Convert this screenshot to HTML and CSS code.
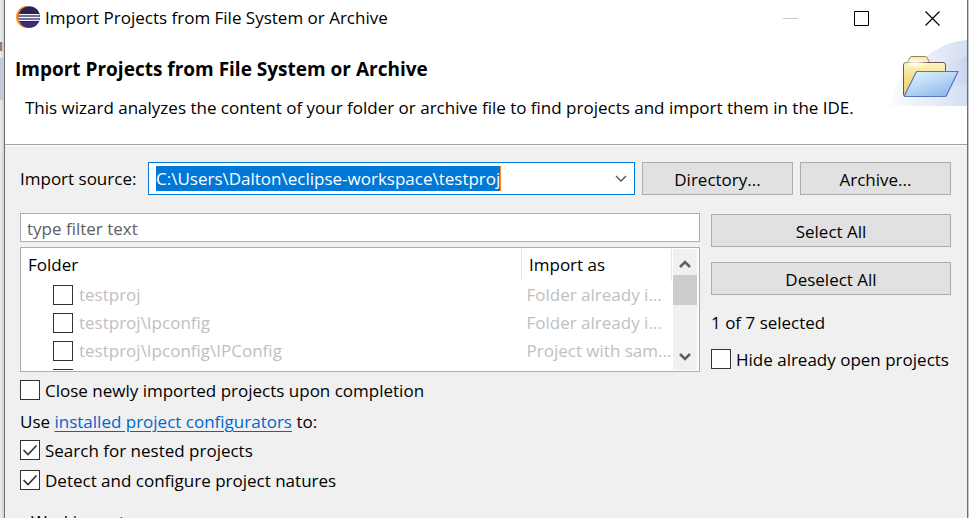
FILE: index.html
```html
<!DOCTYPE html>
<html lang="en">
<head>
<meta charset="utf-8">
<title>Import Projects from File System or Archive</title>
<link rel="stylesheet" href="styles.css">
</head>
<body>
<div class="desktop-edge"><span class="edge-mark"></span><span class="edge-band"></span></div>
<main class="dialog">
  <header class="banner">
    <div class="titlebar">
      <svg class="app-icon" width="24" height="24" viewBox="0 0 24 24" aria-hidden="true">
        <circle cx="11" cy="12" r="11" fill="#f7941e"/>
        <circle cx="14" cy="12" r="11" fill="#fff"/>
        <circle cx="13.200" cy="12" r="10.800" fill="#2c2255"/>
        <path d="M4 17h18a10.500 10.500 0 0 1-18 0z" fill="#3a2f78"/>
        <path d="M3 9.500h20.500M2.500 12.500h21.500M3 15.500h20.500" stroke="#f4f3fa" stroke-width="1.200"/>
        <path d="M2.500 11h21M2.500 14h21" stroke="#8f89b5" stroke-width="1.600"/>
      </svg>
      <span class="window-title">Import Projects from File System or Archive</span>
      <div class="window-buttons">
        <button class="window-button" aria-label="Minimize" disabled><svg width="15" height="15" viewBox="0 0 15 15"><path d="M0 7.500h15" stroke="#c8c8c8"/></svg></button>
        <button class="window-button" aria-label="Maximize"><svg width="15" height="15" viewBox="0 0 15 15"><path d="M.5.5h14v14H.5z" fill="none" stroke="#000"/></svg></button>
        <button class="window-button" aria-label="Close"><svg width="15" height="15" viewBox="0 0 15 15"><path d="M.5.5l14 14M14.500.5l-14 14" stroke="#000" stroke-width="1.200"/></svg></button>
      </div>
    </div>
    <div class="intro">
      <div class="intro-text">
        <h1>Import Projects from File System or Archive</h1>
        <p>This wizard analyzes the content of your folder or archive file to find projects and import them in the IDE.</p>
      </div>
      <svg class="banner-art" width="75" height="66" viewBox="0 0 75 66" aria-hidden="true">
        <defs>
          <linearGradient id="glow" x1="0" x2="1"><stop offset="0" stop-color="#fafbfe"/><stop offset="1" stop-color="#d5dff4"/></linearGradient>
          <linearGradient id="glow2" x1="0" x2="1"><stop offset="0" stop-color="#eef2fb" stop-opacity="0"/><stop offset="1" stop-color="#c3d0ed"/></linearGradient>
          <linearGradient id="back" x1="0" y1="0" x2="0" y2="1"><stop offset="0" stop-color="#fdf6c4"/><stop offset=".4" stop-color="#f5e18d"/><stop offset="1" stop-color="#ead06c"/></linearGradient>
          <linearGradient id="front" x1="0" y1="0" x2=".7" y2="1"><stop offset="0" stop-color="#e4f4fe"/><stop offset=".5" stop-color="#bcdaf7"/><stop offset="1" stop-color="#92b8ea"/></linearGradient>
          <radialGradient id="shine"><stop offset="0" stop-color="#fff"/><stop offset="1" stop-color="#fff" stop-opacity="0"/></radialGradient>
        </defs>
        <path d="M75 0C55 2 40 10 28 23C10 31 1 46 0 66H75z" fill="url(#glow)"/>
        <path d="M75 16C54 21 42 32 34 50L32 66C44 53 57 46 75 44z" fill="url(#glow2)" opacity=".7"/>
        <path d="M15 23L18 17.500Q19 16.500 20 16.500H33Q34.500 16.500 35 17.500L38 23z" fill="#faedb1" stroke="#9b8060"/>
        <path d="M11.500 25Q11.500 22.500 14 22.500H51Q53.500 22.500 53.500 25V50L48 56.500H13.500Q11.500 56.500 11.500 54z" fill="url(#back)" stroke="#765348"/>
        <ellipse cx="23" cy="23" rx="14" ry="5" fill="url(#shine)"/>
        <path d="M25.500 31.500H66L54.500 55.500Q54 56.500 52.500 56.500H14Q12 56.500 13 54.500L24 32.500Q24.500 31.500 25.500 31.500z" fill="url(#front)" stroke="#5876bf" stroke-width="1.200"/>
      </svg>
    </div>
  </header>

  <form class="content">
    <div class="source-row">
      <label for="source">Import source:</label>
      <div class="combo">
        <input id="source" class="combo-text" value="C:\Users\Dalton\eclipse-workspace\testproj">
        <button type="button" class="combo-arrow" aria-label="Show recent sources"><svg width="12" height="8" viewBox="0 0 12 8"><path d="M1 1l5 5 5-5" fill="none" stroke="#505050" stroke-width="1.300"/></svg></button>
      </div>
      <button type="button" class="push">Directory...</button>
      <button type="button" class="push">Archive...</button>
    </div>

    <div class="projects">
      <div class="project-list">
        <input class="filter" placeholder="type filter text" aria-label="Filter projects">
        <div class="tree">
          <div class="tree-view">
            <table>
              <thead><tr><th>Folder</th><th class="import-as">Import as</th></tr></thead>
              <tbody>
                <tr><td><label class="tree-item"><input type="checkbox">testproj</label></td><td>Folder already i...</td></tr>
                <tr><td><label class="tree-item"><input type="checkbox">testproj\Ipconfig</label></td><td>Folder already i...</td></tr>
                <tr><td><label class="tree-item"><input type="checkbox">testproj\Ipconfig\IPConfig</label></td><td>Project with sam...</td></tr>
                <tr><td><label class="tree-item"><input type="checkbox" aria-label="Project"></label></td><td></td></tr>
              </tbody>
            </table>
          </div>
          <div class="scrollbar">
            <svg width="12" height="10" viewBox="0 0 12 10"><path d="M1 8l5-5 5 5" fill="none" stroke="#606060" stroke-width="2.600"/></svg>
            <div class="thumb"></div>
            <svg class="scroll-down" width="12" height="10" viewBox="0 0 12 10"><path d="M1 2l5 5 5-5" fill="none" stroke="#606060" stroke-width="2.600"/></svg>
          </div>
        </div>
      </div>
      <div class="side">
        <button type="button" class="push">Select All</button>
        <button type="button" class="push">Deselect All</button>
        <p class="count">1 of 7 selected</p>
        <label class="check"><input type="checkbox">Hide already open projects</label>
      </div>
    </div>

    <div class="options">
      <label class="check"><input type="checkbox">Close newly imported projects upon completion</label>
      <p class="configurators">Use <a href="#configurators">installed project configurators</a> to:</p>
      <label class="check"><input type="checkbox" checked>Search for nested projects</label>
      <label class="check"><input type="checkbox" checked>Detect and configure project natures</label>
    </div>
    <fieldset class="working-sets"><legend>Working sets</legend></fieldset>
  </form>
</main>
</body>
</html>
```
FILE: styles.css
```css
* { box-sizing: border-box; }

body {
  margin: 0;
  height: 100vh;
  overflow: hidden;
  display: flex;
  background: #c6c6c6;
  color: #000;
  font: 17px/24px "Open Sans", "Noto Sans", sans-serif;
}

h1, p { margin: 0; }
button, input { font: inherit; color: inherit; }

.desktop-edge {
  width: 4px;
  padding-top: 42px;
  background: linear-gradient(90deg, #eceef0, #cfd1d3);
}
.edge-mark { display: block; height: 9px; margin-bottom: 7px; background: linear-gradient(90deg, #a0786c 50%, #c9cacc 50%); }
.edge-band { display: block; height: 42px; background: #c3c8da; }

.dialog {
  flex: 1;
  margin-right: 1px;
  border: solid #6e6e6e;
  border-width: 0 1px;
  background: #f0f0f0;
}

.banner {
  background: #fff;
  border-bottom: 1px solid #a0a0a0;
  box-shadow: 0 1px #fff;
}
.titlebar {
  display: flex;
  align-items: center;
  height: 36px;
  padding-left: 11px;
}
.app-icon { margin: 0 5px 2px 0; }
.window-title { flex: 1; }
.window-buttons { display: flex; }
.window-button {
  display: grid;
  place-items: center;
  width: 71px;
  height: 36px;
  padding: 0 0 0 1px;
  border: 0;
  background: none;
}

.intro { display: flex; height: 108px; padding-top: 4px; }
.intro-text { flex: 1; padding: 17px 0 0 10px; white-space: nowrap; }
.intro h1 { font-size: 19px; line-height: 24px; }
.intro p { padding: 15px 0 0 10px; }

.content { padding: 17px 16px 0 15px; }

.source-row {
  display: grid;
  grid-template-columns: 121px 1fr 151px 151px;
  column-gap: 7px;
  align-items: center;
}
.source-row label { white-space: nowrap; }
.combo {
  display: flex;
  align-items: center;
  justify-content: space-between;
  height: 33px;
  padding-left: 7px;
  border: 1px solid #0078d7;
  background: #fff;
}
.combo-text {
  field-sizing: content;
  height: 25px;
  padding: 0;
  border: 0;
  border-right: 1px solid #ff8728;
  background: #0078d7;
  color: #fff;
}
.combo-arrow { display: grid; place-items: center; width: 26px; height: 31px; padding: 0; border: 0; background: none; }

.push {
  height: 33px;
  padding: 2px 8px 0;
  border: 1px solid #adadad;
  background: #e1e1e1;
}

.projects {
  display: grid;
  grid-template-columns: 1fr 240px;
  column-gap: 11px;
  margin-top: 18px;
}
.filter {
  display: block;
  width: 100%;
  height: 29px;
  padding: 2px 6px 0;
  border: 1px solid #abadb3;
  background: #fff;
}
.filter::placeholder { color: #606060; opacity: 1; }

.tree {
  display: flex;
  height: 125px;
  margin-top: 5px;
  padding: 1px 2px 1px 0;
  border: 1px solid #abadb3;
  background: #fff;
}
.tree-view { flex: 1; overflow: hidden; }
table { width: 100%; border-collapse: collapse; table-layout: fixed; }
th {
  height: 32px;
  padding: 0 0 0 7px;
  border-right: 1px solid #e5e5e5;
  font-weight: 400;
  text-align: left;
}
.import-as { width: 150px; }
td { height: 28px; padding: 0 0 0 5px; color: #c0c0c0; white-space: nowrap; }
.tree-item { display: flex; align-items: center; gap: 6px; height: 28px; padding-left: 27px; }

.scrollbar {
  display: flex;
  flex-direction: column;
  align-items: center;
  width: 24px;
  margin-left: 1px;
  padding: 10px 0 8px;
  background: #f0f0f0;
}
.thumb { width: 24px; height: 30px; margin-top: 6px; background: #cdcdcd; }
.scroll-down { margin-top: auto; }

.side { display: flex; flex-direction: column; padding-top: 1px; }
.side .push + .push { margin-top: 15px; }
.count { margin-top: 16px; }

.check { display: flex; align-items: center; gap: 5px; height: 30px; white-space: nowrap; }
.side .check { margin-top: 10px; }

input[type="checkbox"] {
  appearance: none;
  flex: none;
  width: 20px;
  height: 20px;
  margin: 0;
  border: 1px solid #333;
  background: #fff;
}
.check input[type="checkbox"] { margin-bottom: 2px; }
input[type="checkbox"]:checked {
  background: #fff url("data:image/svg+xml,%3Csvg xmlns='http://www.w3.org/2000/svg' viewBox='0 0 18 18'%3E%3Cpath d='M2.500 9l4.500 4.500 8.500-9' fill='none' stroke='%23333' stroke-width='1.700'/%3E%3C/svg%3E");
}

.options { margin-top: 1px; }
.configurators { height: 30px; line-height: 32px; }
a { color: #0066cc; text-underline-offset: 3px; }

.working-sets { margin: 14px 0 0; padding: 0 8px; height: 60px; border: 1px solid #dcdcdc; }
```
